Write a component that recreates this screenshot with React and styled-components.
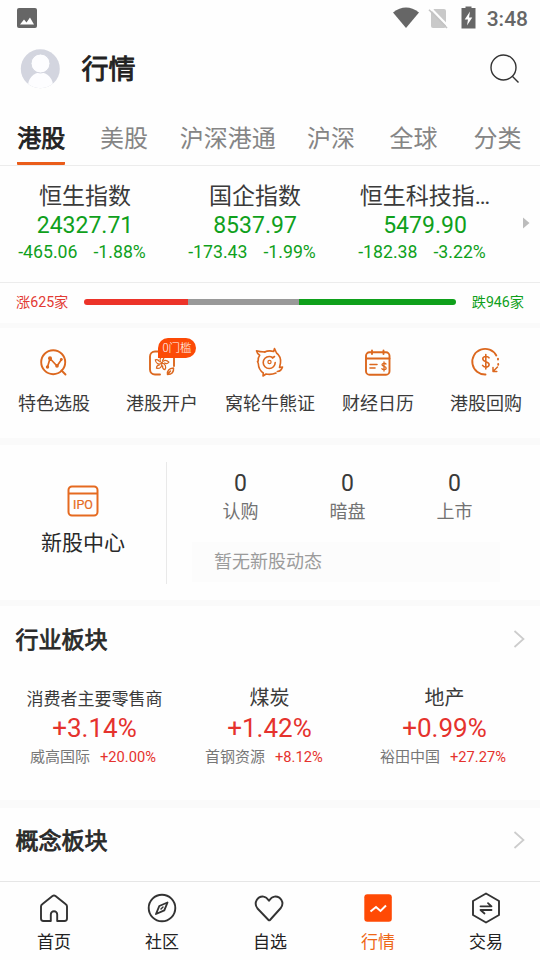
import styled, { createGlobalStyle } from 'styled-components'

const GlobalStyle = createGlobalStyle`
  * {
    box-sizing: border-box;
  }
  body {
    margin: 0;
    background: #fefefe;
    color: #333;
    font-family: Roboto, "Noto Sans CJK SC", sans-serif;
  }
  svg {
    display: block;
    flex: none;
  }
`

const Screen = styled.div`
  width: 540px;
  height: 960px;
  overflow: hidden;
  display: flex;
  flex-direction: column;
`

const StatusBar = styled.div`
  height: 36px;
  flex: none;
  display: flex;
  align-items: center;
  justify-content: space-between;
  padding: 0 12px 0 17px;
`

const StatusIcons = styled.div`
  display: flex;
  align-items: center;
`

const Clock = styled.span`
  margin-left: 10px;
  font-size: 21px;
  line-height: 24px;
  font-weight: 500;
  color: #666;
  padding-top: 2px;
`

const Header = styled.header`
  height: 67px;
  flex: none;
  display: flex;
  align-items: center;
  padding: 0 19px 2px 20px;
`

const Title = styled.h1`
  flex: 1;
  margin: 2px 0 0 21.5px;
  font-size: 27px;
  line-height: 36px;
  font-weight: 400;
  -webkit-text-stroke: 0.9px #222;
  color: #222;
`

const Tabs = styled.nav`
  height: 63px;
  flex: none;
  display: grid;
  grid-template-columns: 82.5px 83px 124.5px 82px 83px 85px;
  justify-items: center;
  border-bottom: 1px solid #ececec;
`

const Tab = styled.div`
  padding-top: 19px;
  font-size: 24px;
  line-height: 34px;
  padding-bottom: 6px;
  height: 62px;
  -webkit-text-stroke: ${p => p.$active ? '0.8px #222' : '0'};
  color: ${p => p.$active ? '#222' : '#858585'};
  border-bottom: 3px solid ${p => p.$active ? '#ea5d1a' : 'transparent'};
  border-radius: 1px;
  white-space: nowrap;
`

const Indices = styled.section`
  height: 117px;
  flex: none;
  display: grid;
  grid-template-columns: repeat(3, 170px) 30px;
  border-bottom: 1px solid #ececec;
`

const Index = styled.div`
  display: flex;
  flex-direction: column;
  align-items: center;
  padding-top: 15px;
  color: #0fa01b;
`

const IndexName = styled.div`
  max-width: 138px;
  font-size: 23px;
  line-height: 32px;
  color: #3a3a3a;
  white-space: nowrap;
`

const IndexValue = styled.div`
  margin-top: -1px;
  font-size: 23px;
  line-height: 28px;
`

const IndexChange = styled.div`
  display: flex;
  gap: 16px;
  margin-top: -1px;
  padding-right: 6px;
  font-size: 17.7px;
  line-height: 26px;
`

const ArrowCell = styled.div`
  padding: 51px 0 0 13px;
`

const Breadth = styled.section`
  height: 40px;
  flex: none;
  display: flex;
  align-items: center;
  justify-content: space-between;
  padding: 0 16px 2px;
`

const BreadthLabel = styled.span`
  font-size: 14.2px;
  line-height: 20px;
  color: ${p => p.$up ? '#e23a33' : '#0fa01b'};
`

const BreadthBar = styled.div`
  width: 372px;
  height: 6px;
  display: flex;
  border-radius: 3px;
  overflow: hidden;
`

const BreadthPart = styled.div`
  flex: ${p => p.$share} 0 0;
  background: ${p => p.$color};
`

const Divider = styled.div`
  height: ${p => p.$size}px;
  flex: none;
  background: #fafafa;
`

const Shortcuts = styled.section`
  height: 110px;
  flex: none;
  display: grid;
  grid-template-columns: repeat(5, 1fr);
`

const Shortcut = styled.div`
  display: flex;
  flex-direction: column;
  align-items: center;
  padding-top: 19px;
  font-size: 18px;
  line-height: 26px;
  color: #3a3a3a;
  white-space: nowrap;
  svg {
    margin-bottom: 12px;
  }
`

const ShortcutIcon = styled.div`
  position: relative;
`

const Badge = styled.span`
  position: absolute;
  left: 12px;
  top: -9px;
  width: 38px;
  height: 20px;
  border-radius: 10px 10px 10px 0;
  background: #fc4a06;
  color: #fff;
  font-family: "Noto Sans CJK SC", sans-serif;
  font-size: 11.5px;
  font-weight: 300;
  line-height: 19px;
  text-align: center;
`

const Ipo = styled.section`
  height: 155px;
  flex: none;
  display: flex;
`

const IpoCenter = styled.div`
  width: 167px;
  height: 122px;
  margin-top: 17px;
  border-right: 1px solid #e9e9e9;
  display: flex;
  flex-direction: column;
  align-items: center;
  padding-top: 23px;
  font-size: 21px;
  line-height: 30px;
  color: #292929;
  svg {
    margin-bottom: 11px;
  }
`

const IpoInfo = styled.div`
  width: 321px;
  margin-left: 20px;
  padding-top: 25px;
`

const IpoStats = styled.div`
  display: grid;
  grid-template-columns: repeat(3, 1fr);
  text-align: center;
`

const StatNumber = styled.div`
  font-size: 23px;
  line-height: 28px;
  color: #3a3a3a;
`

const StatLabel = styled.div`
  font-size: 18px;
  line-height: 27px;
  color: #727272;
`

const IpoNews = styled.div`
  height: 40px;
  margin: 17px 8px 0 5px;
  padding-left: 22px;
  background: #fcfcfc;
  font-size: 18px;
  line-height: 40px;
  color: #9b9b9b;
`

const SectionHead = styled.div`
  height: ${p => p.$height}px;
  flex: none;
  display: flex;
  align-items: center;
  justify-content: space-between;
  padding: 0 15px;
`

const SectionTitle = styled.h2`
  margin: 0;
  padding: 3px 0 0 0.5px;
  font-size: 23px;
  line-height: 32px;
  font-weight: 400;
  -webkit-text-stroke: 0.8px #292929;
  color: #292929;
`

const Sectors = styled.section`
  height: 128px;
  flex: none;
  display: grid;
  grid-template-columns: repeat(3, 175px);
  padding: 11px 0 0 7px;
`

const Sector = styled.div`
  display: flex;
  flex-direction: column;
  align-items: center;
`

const SectorName = styled.div`
  font-size: ${p => p.$small ? 17 : 20}px;
  line-height: 30px;
  padding-top: ${p => p.$small ? 1 : 0}px;
  height: 29px;
  color: #3a3a3a;
`

const SectorChange = styled.div`
  font-size: 26px;
  line-height: 32px;
  color: #e5322d;
`

const SectorStock = styled.div`
  display: flex;
  gap: 10px;
  padding-right: 2px;
  font-size: 15px;
  line-height: 26px;
  color: #777;
  em {
    min-width: 57px;
    font-size: 14.7px;
    font-style: normal;
    color: #e5322d;
  }
`

const BottomNav = styled.nav`
  height: 79px;
  flex: none;
  margin-top: auto;
  display: grid;
  grid-template-columns: repeat(5, 1fr);
  border-top: 1px solid #e6e6e6;
`

const NavItem = styled.div`
  display: flex;
  flex-direction: column;
  align-items: center;
  padding-top: 10px;
  font-size: 17px;
  line-height: 26px;
  color: ${p => p.$active ? '#ee6716' : '#222'};
  svg {
    margin-bottom: 5px;
  }
`

const ORANGE = '#dc681f'

function LineIcon({ size = 32, color = ORANGE, width = 1.9, children }) {
  return (
    <svg width={size} height={size} viewBox={`0 0 ${size} ${size}`} fill="none" stroke={color}
      strokeWidth={width} strokeLinecap="round" strokeLinejoin="round">
      {children}
    </svg>
  )
}

function PickIcon() {
  return (
    <LineIcon>
      <circle cx="15.2" cy="15.2" r="12" />
      <path d="M23.5 23.5l4 4" />
      <path d="M9.500 20l2.500-8.500 7 7.500 4.500-6.500" strokeWidth="1.7" />
      <g fill={ORANGE} stroke="none">
        <circle cx="9.500" cy="20" r="1.700" />
        <circle cx="12" cy="11.300" r="2" />
        <circle cx="19" cy="18.900" r="1.800" />
        <circle cx="23.300" cy="12.500" r="1.400" />
      </g>
    </LineIcon>
  )
}

function AccountIcon() {
  return (
    <LineIcon>
      <path d="M14 27.5H9a5 5 0 0 1-5-5v-13a5 5 0 0 1 5-5h14a5 5 0 0 1 5 5V19" />
      <g strokeWidth="1.2">
        {[10, 82, 154, 226, 298].map(a => (
          <path key={a} transform={`rotate(${a} 15.7 16.2)`} d="M15.700 16.200c-3.300-2-2.800-5.300 0-7.300c2 2 1.500 3 .3 4.500" />
        ))}
      </g>
      <path d="M21.500 27.500c-.5-4 1.500-6 6-6.500c.5 4-1.500 6.500-6 6.500zl3-3.500" strokeWidth="1.500" />
    </LineIcon>
  )
}

function WarrantIcon() {
  return (
    <LineIcon width={1.6}>
      <path d="M11 5C8 5 5 4.800 2.500 3.800c.5 2.200 1.700 3.600 3.200 4.500C4.500 9.800 4 11.500 4.200 14l-.7.500.8 2c.2 4.500 2 7.500 5 9.500L9 29l3-2c3.500.8 7 .3 10-1" />
      <path d="M10.500 5c3-1.300 6-1.500 9.200-.5l.8-3 2 4.500c3.300 2.500 4.500 6 4 10l-1 4.500 3-.5c-.8 2.800-2.500 4.300-5.200 4.500" />
      <circle cx="15.200" cy="15.500" r="6" strokeDasharray="31 7" />
      <circle cx="15.500" cy="15" r="1.600" strokeWidth="1.200" />
      <path d="M18.500 11l2-1.500" />
    </LineIcon>
  )
}

function CalendarIcon() {
  return (
    <LineIcon>
      <rect x="4" y="5.300" width="23.500" height="22.400" rx="3.500" />
      <path d="M4 11.500h23.500M10 3.500V7M21.500 3.500V7" />
      <path d="M8 17.500h7M8 21h5" strokeWidth="1.600" />
      <path d="M24 17c-1-1.200-4-1-4 .8 0 2 4.200 1.300 4.200 3.400 0 1.800-3.400 2-4.400.5M22 15v9" strokeWidth="1.300" />
    </LineIcon>
  )
}

function BuybackIcon() {
  return (
    <LineIcon>
      <path d="M15.500 27.500A12.800 12.800 0 1 1 26.300 8.500" />
      <path d="M28 11.800v.8M28.200 17v.8" />
      <path d="M27.500 20l-4.500 4.500M23 20.500v4h3.800" strokeWidth="1.500" />
      <path d="M19 10.800c-1.500-2.200-6.400-1.500-6.200 1.300.2 3 6.300 2.200 6.300 5.500 0 3-5 3.400-6.500.8M15.800 7.500V22" strokeWidth="1.600" />
    </LineIcon>
  )
}

function IpoIcon() {
  return (
    <svg width="32" height="32" viewBox="0 0 32 32" fill="none" stroke="#e56a20" strokeWidth="2">
      <rect x="1.500" y="1.500" width="29" height="29" rx="3.500" />
      <path d="M1.500 8.500h29" />
      <text x="16" y="24" textAnchor="middle" fontFamily="Roboto, sans-serif" fontSize="12.500" fill="#e56a20" strokeWidth=".2">IPO</text>
    </svg>
  )
}

function Chevron() {
  return (
    <svg width="12" height="20" viewBox="0 0 12 20" fill="none" stroke="#ccc" strokeWidth="1.700">
      <path d="M1.500 2l9 8-9 8" />
    </svg>
  )
}

const TABS = ['港股', '美股', '沪深港通', '沪深', '全球', '分类']

const INDICES = [
  { name: '恒生指数', value: '24327.71', diff: '-465.06', pct: '-1.88%' },
  { name: '国企指数', value: '8537.97', diff: '-173.43', pct: '-1.99%' },
  { name: '恒生科技指…', value: '5479.90', diff: '-182.38', pct: '-3.22%' },
]

const SHORTCUTS = [
  { label: '特色选股', icon: <PickIcon /> },
  { label: '港股开户', icon: <AccountIcon />, badge: '0门槛' },
  { label: '窝轮牛熊证', icon: <WarrantIcon /> },
  { label: '财经日历', icon: <CalendarIcon /> },
  { label: '港股回购', icon: <BuybackIcon /> },
]

const SECTORS = [
  { name: '消费者主要零售商', pct: '+3.14%', stock: '威高国际', stockPct: '+20.00%' },
  { name: '煤炭', pct: '+1.42%', stock: '首钢资源', stockPct: '+8.12%' },
  { name: '地产', pct: '+0.99%', stock: '裕田中国', stockPct: '+27.27%' },
]

const NAV = [
  {
    label: '首页',
    icon: (
      <LineIcon color="#333">
        <path d="M12.800 29H5.500A2.500 2.500 0 0 1 3 26.500V14.500c0-1 .4-1.700 1.200-2.300L14.500 4a2.500 2.500 0 0 1 3 0l10.300 8.200c.8.600 1.200 1.300 1.200 2.300v12a2.500 2.500 0 0 1-2.500 2.500h-7.300v-6.500a3.200 3.200 0 0 0-6.400 0z" />
      </LineIcon>
    ),
  },
  {
    label: '社区',
    icon: (
      <LineIcon color="#333">
        <circle cx="16" cy="16" r="13.300" />
        <path d="M21.500 10.500l-3.200 7.800-8.300 3.700 3.300-8z" />
        <path d="M15 17l2-2" strokeWidth="1.500" />
      </LineIcon>
    ),
  },
  {
    label: '自选',
    icon: (
      <LineIcon color="#333">
        <path d="M14.500 28L3.500 16.500C-1 10.500 4 4 9.500 4.600c2.500.3 4 2 5.500 4.200C16.500 6.500 18 4.900 20.500 4.600c6-.6 10.300 6 6.300 11.400L16 28q-.8.800-1.500 0z" />
      </LineIcon>
    ),
  },
  {
    label: '行情',
    icon: (
      <svg width="32" height="32" viewBox="0 0 32 32" fill="none">
        <rect x="2.300" y="2.300" width="27.500" height="27.500" rx="3" fill="#ff4a05" />
        <path d="M8.500 19.500l5.500-4.500 4.500 4 5.500-5.500" stroke="#fff" strokeWidth="2" />
      </svg>
    ),
  },
  {
    label: '交易',
    icon: (
      <LineIcon color="#333">
        <path d="M16 1.500l13 7.500v14l-13 7.500L3 23V9z" />
        <path d="M10.500 14.300h11l-3.500-3.200M21.500 18h-11l4 3.500" strokeWidth="1.800" />
      </LineIcon>
    ),
  },
]

export default function App() {
  return (
    <Screen>
      <GlobalStyle />
      <StatusBar>
        <svg width="20" height="20" viewBox="0 0 20 20">
          <rect width="20" height="20" rx="2" fill="#666" />
          <path d="M3 16.500l4-5 2.500 3L13 9.500l4 7z" fill="#fff" />
        </svg>
        <StatusIcons>
          <svg width="84" height="24" viewBox="0 0 84 24">
            <path d="M0 6.500Q13 -3.500 26 6.500L13 22z" fill="#666" />
            <path d="M41 3h10a2 2 0 0 1 2 2v15a2 2 0 0 1-2 2H40a2 2 0 0 1-2-2V6z" fill="#c9c9c9" />
            <path d="M37.500 2l18 18.500" stroke="#fefefe" strokeWidth="2.200" />
            <path d="M36 3.800l18 18.200" stroke="#c4c4c4" strokeWidth="1.600" />
            <path d="M68.500 2h4V.500h6V2h4v20.500h-14z" fill="#666" />
            <path d="M77 5.500l-5.300 8H75l-1 6 5.300-8H76z" fill="#fff" />
          </svg>
          <Clock>3:48</Clock>
        </StatusIcons>
      </StatusBar>
      <Header>
        <svg width="40" height="40" viewBox="0 0 40 40">
          <clipPath id="avatar"><circle cx="20.300" cy="19.800" r="19.500" /></clipPath>
          <g clipPath="url(#avatar)">
            <rect width="40" height="40" fill="#d3d5df" />
            <ellipse cx="20.500" cy="37" rx="12.500" ry="13.500" fill="#fdfdff" />
            <circle cx="20.500" cy="14.500" r="9.500" fill="#fdfdff" stroke="#d3d5df" strokeWidth="1" />
          </g>
        </svg>
        <Title>行情</Title>
        <svg width="32" height="32" viewBox="0 0 32 32" fill="none" stroke="#333" strokeWidth="1.400">
          <circle cx="14.500" cy="14.500" r="12.500" />
          <path d="M23.300 23.300l6.200 6.200" />
        </svg>
      </Header>
      <Tabs>
        {TABS.map((t, i) => <Tab key={t} $active={i === 0}>{t}</Tab>)}
      </Tabs>
      <Indices>
        {INDICES.map(x => (
          <Index key={x.name}>
            <IndexName>{x.name}</IndexName>
            <IndexValue>{x.value}</IndexValue>
            <IndexChange><span>{x.diff}</span><span>{x.pct}</span></IndexChange>
          </Index>
        ))}
        <ArrowCell>
          <svg width="7" height="12" viewBox="0 0 7 12"><path d="M0 .5L6.500 6 0 11.500z" fill="#bcbcbc" /></svg>
        </ArrowCell>
      </Indices>
      <Breadth>
        <BreadthLabel $up>涨625家</BreadthLabel>
        <BreadthBar>
          <BreadthPart $share={104} $color="#ec3329" />
          <BreadthPart $share={111} $color="#999" />
          <BreadthPart $share={157} $color="#0fa01b" />
        </BreadthBar>
        <BreadthLabel>跌946家</BreadthLabel>
      </Breadth>
      <Divider $size={5} />
      <Shortcuts>
        {SHORTCUTS.map(s => (
          <Shortcut key={s.label}>
            <ShortcutIcon>
              {s.icon}
              {s.badge && <Badge>{s.badge}</Badge>}
            </ShortcutIcon>
            {s.label}
          </Shortcut>
        ))}
      </Shortcuts>
      <Divider $size={7} />
      <Ipo>
        <IpoCenter>
          <IpoIcon />
          新股中心
        </IpoCenter>
        <IpoInfo>
          <IpoStats>
            {['认购', '暗盘', '上市'].map(label => (
              <div key={label}>
                <StatNumber>0</StatNumber>
                <StatLabel>{label}</StatLabel>
              </div>
            ))}
          </IpoStats>
          <IpoNews>暂无新股动态</IpoNews>
        </IpoInfo>
      </Ipo>
      <Divider $size={6} />
      <SectionHead $height={66}>
        <SectionTitle>行业板块</SectionTitle>
        <Chevron />
      </SectionHead>
      <Sectors>
        {SECTORS.map(s => (
          <Sector key={s.name}>
            <SectorName $small={s.name.length > 6}>{s.name}</SectorName>
            <SectorChange>{s.pct}</SectorChange>
            <SectorStock>{s.stock}<em>{s.stockPct}</em></SectorStock>
          </Sector>
        ))}
      </Sectors>
      <Divider $size={8} />
      <SectionHead $height={64}>
        <SectionTitle>概念板块</SectionTitle>
        <Chevron />
      </SectionHead>
      <BottomNav>
        {NAV.map(n => (
          <NavItem key={n.label} $active={n.label === '行情'}>
            {n.icon}
            {n.label}
          </NavItem>
        ))}
      </BottomNav>
    </Screen>
  )
}
